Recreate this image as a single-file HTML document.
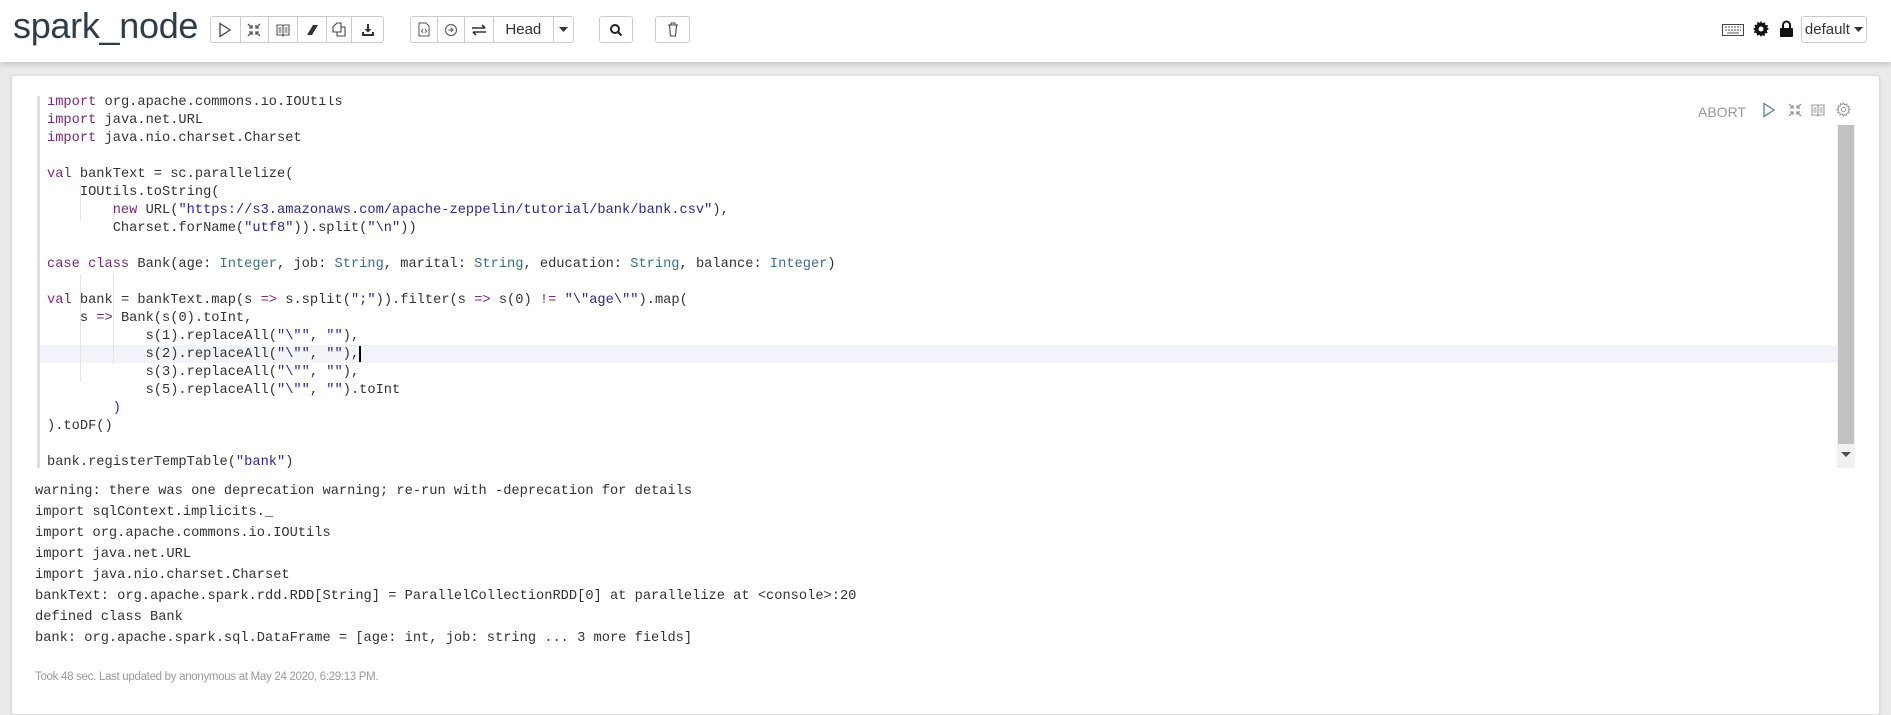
<!DOCTYPE html>
<html><head><meta charset="utf-8">
<style>
*{box-sizing:border-box;margin:0;padding:0}
body{width:1891px;height:690px;overflow:hidden;background:#e9ebeb;font-family:"Liberation Sans",sans-serif;position:relative}
.hdr{position:absolute;left:0;top:0;width:1891px;height:62px;background:#fff;box-shadow:0 2px 6px rgba(0,0,0,.18)}
.title{position:absolute;left:13px;top:5px;font-size:36px;color:#2f3d4a;letter-spacing:-0.3px}
.grp{position:absolute;top:16px;height:27px;border:1px solid #ccc;border-radius:3px;display:flex;background:#fff}
.grp>div{height:25px;border-right:1px solid #ccc;display:flex;align-items:center;justify-content:center}
.grp>div:last-child{border-right:none}
.card{position:absolute;left:11px;top:75px;width:1869px;height:640px;background:#fff;border:1px solid #dcdcdc;border-radius:3px;box-shadow:0 1px 3px rgba(0,0,0,.1)}
.ed{position:absolute;left:37px;top:96px;width:1818px;height:372px;overflow:hidden}
.code{position:absolute;left:10px;top:-2px;font-family:"Liberation Mono",monospace;font-size:13.7px;line-height:18px;color:#333;white-space:pre}
.k{color:#7a2a7a}.t{color:#3c6f8c}.s{color:#2a2a8a}
.out{position:absolute;left:35px;top:481px;font-family:"Liberation Mono",monospace;font-size:13.7px;line-height:21px;color:#333;white-space:pre}
.foot{position:absolute;left:35px;top:671px;font-size:11.5px;color:#999;letter-spacing:-0.3px}
</style></head><body>
<div class="hdr">
<div class="title">spark_node</div>
<div class="grp" style="left:210px;width:174px">
 <div style="width:30px"><svg width="14" height="16" viewBox="0 0 14 16"><path d="M2 1.5L12 8 2 14.5Z" fill="none" stroke="#444" stroke-width="1.3"/></svg></div>
 <div style="width:28px"><svg width="14" height="14" viewBox="0 0 14 14" stroke="#555" stroke-width="1.3" fill="none"><path d="M1 1l4 4M5 2v3H2M13 1L9 5M9 2v3h3M1 13l4-4M5 12V9H2M13 13L9 9M9 12V9h3"/></svg></div>
 <div style="width:29px"><svg width="14" height="14" viewBox="0 0 14 14" stroke="#555" stroke-width="1.1" fill="none"><path d="M1 2h5l1 1 1-1h5v10H8l-1 1-1-1H1zM7 3v10M2.5 5h3M2.5 7h3M2.5 9h3M8.5 5h3M8.5 7h3M8.5 9h3"/></svg></div>
 <div style="width:30px"><svg width="14" height="12" viewBox="0 0 14 12"><path d="M8 1h5L7 11H2z" fill="#333"/></svg></div>
 <div style="width:25px"><svg width="14" height="15" viewBox="0 0 14 15" stroke="#444" stroke-width="1.1" fill="none"><path d="M5 1h4v9H1V5zM9 5h4v9H5v-4"/></svg></div>
 <div style="width:31px"><svg width="14" height="14" viewBox="0 0 14 14" fill="#333"><path d="M6 1h2v5h2.5L7 9.5 3.5 6H6zM1 9h2v2h8V9h2v4H1z"/></svg></div>
</div>
<div class="grp" style="left:410px;width:164px">
 <div style="width:27px"><svg width="12" height="15" viewBox="0 0 12 15" stroke="#555" stroke-width="1" fill="none"><path d="M1 1h7l3 3v10H1zM5 7L3.5 9 5 11M7 7l1.5 2L7 11"/></svg></div>
 <div style="width:27px"><svg width="14" height="14" viewBox="0 0 14 14"><circle cx="7" cy="7" r="5.5" fill="none" stroke="#666" stroke-width="1.2"/><path d="M4.5 7h4M7 5l2 2-2 2" stroke="#666" stroke-width="1.2" fill="none"/></svg></div>
 <div style="width:29px"><svg width="16" height="12" viewBox="0 0 16 12" stroke="#333" stroke-width="1.6" fill="none"><path d="M1 4h13M11 1l3 3M15 8H2M5 11L2 8"/></svg></div>
 <div style="width:61px;font-size:15px;color:#333">Head</div>
 <div style="width:19px"><svg width="9" height="6"><path d="M0 0h9L4.5 5z" fill="#333"/></svg></div>
</div>
<div class="grp" style="left:599px;width:34px"><div style="width:32px"><svg width="14" height="14" viewBox="0 0 14 14" stroke="#222" stroke-width="2" fill="none"><circle cx="6" cy="6" r="4"/><path d="M9 9l3.5 3.5"/></svg></div></div>
<div class="grp" style="left:655px;width:35px"><div style="width:33px"><svg width="12" height="15" viewBox="0 0 12 15" stroke="#444" stroke-width="1.1" fill="none"><path d="M1 3h10M4 3V1h4v2M2.5 3l1 11h5l1-11"/></svg></div></div>
<svg style="position:absolute;left:1722px;top:24px" width="22" height="12" viewBox="0 0 22 12"><rect x=".5" y=".5" width="21" height="11" fill="none" stroke="#444"/><path d="M3 3h2M6 3h2M9 3h2M12 3h2M15 3h2M18 3h1M3 6h2M6 6h2M9 6h2M12 6h2M15 6h2M18 6h1M5 9h12" stroke="#555"/></svg>
<svg style="position:absolute;left:1753px;top:21px" width="16" height="16" viewBox="0 0 16 16"><path d="M8 0l1.5 2.3 2.6-1 .2 2.8 2.8.2-1 2.6L16 8l-2.3 1.5 1 2.6-2.8.2-.2 2.8-2.6-1L8 16l-1.5-2.3-2.6 1-.2-2.8-2.8-.2 1-2.6L0 8l2.3-1.5-1-2.6 2.8-.2.2-2.8 2.6 1z" fill="#111"/><circle cx="8" cy="8" r="2.5" fill="#fff"/></svg>
<svg style="position:absolute;left:1780px;top:20px" width="13" height="17" viewBox="0 0 13 17"><path d="M3 8V5a3.5 3.5 0 017 0v3" stroke="#111" stroke-width="2" fill="none"/><rect x="0" y="8" width="13" height="9" rx="1" fill="#111"/></svg>
<div class="grp" style="left:1801px;width:66px"><div style="width:64px;font-size:15px;color:#333">default&nbsp;<svg width="9" height="6"><path d="M0 0h9L4.5 5z" fill="#333"/></svg></div></div>
</div>

<div class="card"></div>

<div class="ed">
 <div style="position:absolute;left:0;top:0;width:3px;height:372px;background:#ddd"></div>
 <div style="position:absolute;left:3px;top:249px;width:1797px;height:18px;background:#f3f3fa"></div>
 <div style="position:absolute;left:1800px;top:29px;width:18px;height:343px;background:#f1f1f1"></div>
 <div style="position:absolute;left:1801px;top:29px;width:16px;height:319px;background:#c1c1c1"></div>
 <svg style="position:absolute;left:1804px;top:356px" width="10" height="6"><path d="M0 0h10L5 5z" fill="#505050"/></svg>
 <div style="position:absolute;left:43px;top:88px;width:1px;height:36px;background:#e4e4e4"></div>
 <div style="position:absolute;left:76px;top:106px;width:1px;height:18px;background:#e4e4e4"></div>
 <div style="position:absolute;left:43px;top:178px;width:1px;height:108px;background:#e4e4e4"></div>
 <div style="position:absolute;left:76px;top:178px;width:1px;height:90px;background:#e4e4e4"></div>
 <div style="position:absolute;left:322px;top:250px;width:2px;height:16px;background:#000"></div>
<div class="code"><span class="k">import</span> org.apache.commons.io.IOUtils
<span class="k">import</span> java.net.URL
<span class="k">import</span> java.nio.charset.Charset

<span class="k">val</span> bankText = sc.parallelize(
    IOUtils.toString(
        <span class="k">new</span> URL(<span class="s">"https://s3.amazonaws.com/apache-zeppelin/tutorial/bank/bank.csv"</span>),
        Charset.forName(<span class="s">"utf8"</span>)).split(<span class="s">"\n"</span>))

<span class="k">case class</span> Bank(age: <span class="t">Integer</span>, job: <span class="t">String</span>, marital: <span class="t">String</span>, education: <span class="t">String</span>, balance: <span class="t">Integer</span>)

<span class="k">val</span> bank = bankText.map(s <span class="k">=&gt;</span> s.split(<span class="s">";"</span>)).filter(s <span class="k">=&gt;</span> s(0) <span class="k">!=</span> <span class="s">"\"age\""</span>).map(
    s <span class="k">=&gt;</span> Bank(s(0).toInt,
            s(1).replaceAll(<span class="s">"\""</span>, <span class="s">""</span>),
            s(2).replaceAll(<span class="s">"\""</span>, <span class="s">""</span>),
            s(3).replaceAll(<span class="s">"\""</span>, <span class="s">""</span>),
            s(5).replaceAll(<span class="s">"\""</span>, <span class="s">""</span>).toInt
        <span class="s">)</span>
).toDF()

bank.registerTempTable(<span class="s">"bank"</span>)</div>
</div>

<div style="position:absolute;left:1698px;top:104px;font-size:14px;color:#999;background:#fff">ABORT</div>
<svg style="position:absolute;left:1762px;top:102px" width="14" height="16" viewBox="0 0 14 16"><path d="M2 1.5L12 8 2 14.5Z" fill="none" stroke="#5a7fa3" stroke-width="1.3"/></svg>
<svg style="position:absolute;left:1788px;top:103px" width="14" height="14" viewBox="0 0 14 14" stroke="#999" stroke-width="1.3" fill="none"><path d="M1 1l4 4M5 2v3H2M13 1L9 5M9 2v3h3M1 13l4-4M5 12V9H2M13 13L9 9M9 12V9h3"/></svg>
<svg style="position:absolute;left:1811px;top:103px" width="14" height="14" viewBox="0 0 14 14" stroke="#999" stroke-width="1.1" fill="none"><path d="M1 2h5l1 1 1-1h5v10H8l-1 1-1-1H1zM7 3v10M2.5 5h3M2.5 7h3M2.5 9h3M8.5 5h3M8.5 7h3M8.5 9h3"/></svg>
<svg style="position:absolute;left:1836px;top:102px" width="15" height="15" viewBox="0 0 16 16"><path d="M8 1l1.3 2 2.3-.9.2 2.4 2.4.2-.9 2.3L15 8l-2 1.3.9 2.3-2.4.2-.2 2.4-2.3-.9L8 15l-1.3-2-2.3.9-.2-2.4-2.4-.2.9-2.3L1 8l2-1.3-.9-2.3 2.4-.2.2-2.4 2.3.9z" fill="none" stroke="#999" stroke-width="1.1"/><circle cx="8" cy="8" r="2.3" fill="none" stroke="#999"/></svg>

<div class="out">warning: there was one deprecation warning; re-run with -deprecation for details
import sqlContext.implicits._
import org.apache.commons.io.IOUtils
import java.net.URL
import java.nio.charset.Charset
bankText: org.apache.spark.rdd.RDD[String] = ParallelCollectionRDD[0] at parallelize at &lt;console&gt;:20
defined class Bank
bank: org.apache.spark.sql.DataFrame = [age: int, job: string ... 3 more fields]</div>
<div class="foot">Took 48 sec. Last updated by anonymous at May 24 2020, 6:29:13 PM.</div>
</body></html>
